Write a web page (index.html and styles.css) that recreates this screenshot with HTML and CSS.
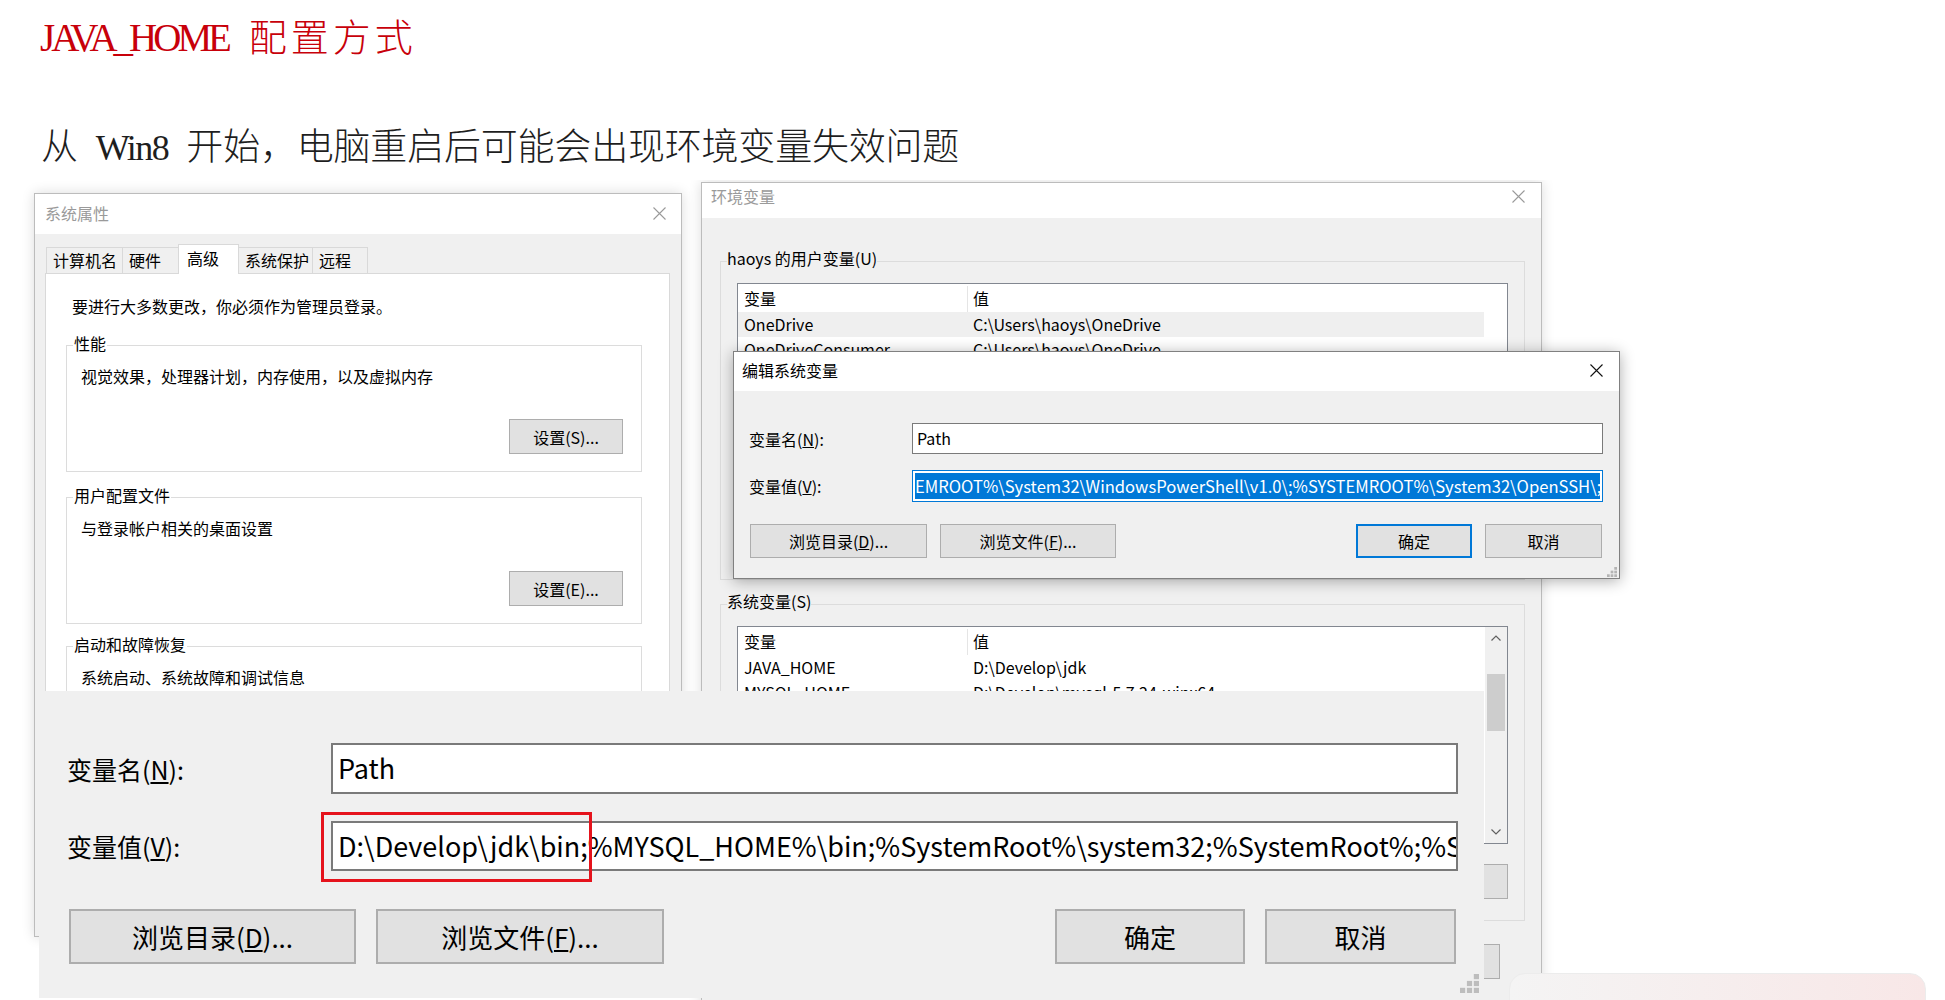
FILE: index.html
```html
<!DOCTYPE html>
<html lang="zh-CN">
<head>
<meta charset="utf-8">
<title>JAVA_HOME 配置方式</title>
<link rel="stylesheet" href="styles.css">
</head>
<body>
<main class="doc">
  <h1 class="title"><span class="lat">JAVA_HOME </span>配置方式</h1>
  <p class="lead">从<span class="lat"> Win8 </span>开始，电脑重启后可能会出现环境变量失效问题</p>

  <div class="stage">
    <!-- 系统属性 -->
    <section class="win sysprop">
      <header class="titlebar">
        <span class="cap">系统属性</span>
        <span class="close"><svg width="13" height="13" viewBox="0 0 13 13"><path d="M0.5 0.5 L12.5 12.5 M12.5 0.5 L0.5 12.5" stroke="#9a9a9a" stroke-width="1.1" fill="none"/></svg></span>
      </header>
      <div class="sp-body">
        <div class="tabs">
          <span class="tab t1">计算机名</span>
          <span class="tab t2">硬件</span>
          <span class="tab t3 sel">高级</span>
          <span class="tab t4">系统保护</span>
          <span class="tab t5">远程</span>
        </div>
        <div class="panel">
          <p class="note">要进行大多数更改，你必须作为管理员登录。</p>
          <fieldset class="grp g1">
            <legend>性能</legend>
            <p class="gtext">视觉效果，处理器计划，内存使用，以及虚拟内存</p>
            <div class="btnrow"><span class="btn setbtn">设置(S)...</span></div>
          </fieldset>
          <fieldset class="grp g2">
            <legend>用户配置文件</legend>
            <p class="gtext">与登录帐户相关的桌面设置</p>
            <div class="btnrow"><span class="btn setbtn">设置(E)...</span></div>
          </fieldset>
          <fieldset class="grp g3">
            <legend>启动和故障恢复</legend>
            <p class="gtext">系统启动、系统故障和调试信息</p>
          </fieldset>
        </div>
      </div>
    </section>

    <!-- 环境变量 -->
    <section class="win envvars">
      <header class="titlebar">
        <span class="cap">环境变量</span>
        <span class="close"><svg width="13" height="13" viewBox="0 0 13 13"><path d="M0.5 0.5 L12.5 12.5 M12.5 0.5 L0.5 12.5" stroke="#9a9a9a" stroke-width="1.1" fill="none"/></svg></span>
      </header>
      <div class="ev-body">
        <fieldset class="egrp eg1">
          <legend>haoys 的用户变量(U)</legend>
          <div class="lv lv1">
            <div class="lv-main">
              <div class="lv-head"><span class="c1">变量</span><span class="c2">值</span></div>
              <div class="lv-row hl"><span class="c1">OneDrive</span><span class="c2">C:\Users\haoys\OneDrive</span></div>
              <div class="lv-row"><span class="c1">OneDriveConsumer</span><span class="c2">C:\Users\haoys\OneDrive</span></div>
            </div>
            <div class="lv-side"></div>
          </div>
        </fieldset>
        <fieldset class="egrp eg2">
          <legend>系统变量(S)</legend>
          <div class="lv lv2">
            <div class="lv-main">
              <div class="lv-head"><span class="c1">变量</span><span class="c2">值</span></div>
              <div class="lv-row"><span class="c1">JAVA_HOME</span><span class="c2">D:\Develop\jdk</span></div>
              <div class="lv-row"><span class="c1">MYSQL_HOME</span><span class="c2">D:\Develop\mysql-5.7.24-winx64</span></div>
            </div>
            <div class="sbar">
              <span class="arrow"><svg width="10" height="6" viewBox="0 0 10 6"><path d="M0.5 5.5 L5 1 L9.5 5.5" stroke="#606060" stroke-width="1.2" fill="none"/></svg></span>
              <span class="track"><span class="thumb"></span></span>
              <span class="arrow"><svg width="10" height="6" viewBox="0 0 10 6"><path d="M0.5 0.5 L5 5 L9.5 0.5" stroke="#606060" stroke-width="1.2" fill="none"/></svg></span>
            </div>
          </div>
          <div class="ev-btns">
            <span class="btn evbtn"></span>
            <span class="btn evbtn"></span>
            <span class="btn evbtn"></span>
          </div>
        </fieldset>
        <div class="ev-foot">
          <span class="btn evbtn"></span>
          <span class="btn evbtn"></span>
        </div>
      </div>
    </section>

    <!-- 编辑系统变量 -->
    <section class="win editvar">
      <header class="titlebar">
        <span class="cap">编辑系统变量</span>
        <span class="close"><svg width="13" height="13" viewBox="0 0 13 13"><path d="M0.5 0.5 L12.5 12.5 M12.5 0.5 L0.5 12.5" stroke="#111" stroke-width="1.1" fill="none"/></svg></span>
      </header>
      <div class="ed-body">
        <div class="ed-row">
          <span class="ed-label">变量名(<u>N</u>):</span>
          <span class="ed-input">Path</span>
        </div>
        <div class="ed-row r2">
          <span class="ed-label">变量值(<u>V</u>):</span>
          <span class="ed-input focus"><span class="selected">EMROOT%\System32\WindowsPowerShell\v1.0\;%SYSTEMROOT%\System32\OpenSSH\;</span></span>
        </div>
        <div class="ed-btns">
          <div class="grp-l">
            <span class="btn edbtn b1">浏览目录(<u>D</u>)...</span>
            <span class="btn edbtn b2">浏览文件(<u>F</u>)...</span>
          </div>
          <div class="grp-r">
            <span class="btn edbtn b3 default">确定</span>
            <span class="btn edbtn b4">取消</span>
          </div>
        </div>
      </div>
      <svg class="grip small" width="10" height="10" viewBox="0 0 11 11"><g fill="#b4b4b4"><rect x="8" y="0" width="3" height="3"/><rect x="4" y="4" width="3" height="3"/><rect x="8" y="4" width="3" height="3"/><rect x="0" y="8" width="3" height="3"/><rect x="4" y="8" width="3" height="3"/><rect x="8" y="8" width="3" height="3"/></g></svg>
    </section>

    <!-- 放大的编辑对话框 -->
    <section class="win bigedit">
      <div class="be-row">
        <span class="be-label">变量名(<u>N</u>):</span>
        <span class="be-field"><span class="be-input">Path</span></span>
      </div>
      <div class="be-row r2">
        <span class="be-label">变量值(<u>V</u>):</span>
        <span class="be-field">
          <span class="be-input">D:\Develop\jdk\bin;%MYSQL_HOME%\bin;%SystemRoot%\system32;%SystemRoot%;%SystemRoot%\System32\Wbem;</span>
          <span class="redbox"></span>
        </span>
      </div>
      <div class="be-btns">
        <div class="grp-l">
          <span class="btn bebtn w1">浏览目录(<u>D</u>)...</span>
          <span class="btn bebtn w2">浏览文件(<u>F</u>)...</span>
        </div>
        <div class="grp-r">
          <span class="btn bebtn w3">确定</span>
          <span class="btn bebtn w4">取消</span>
        </div>
      </div>
      <svg class="grip big" width="19" height="19" viewBox="0 0 11 11"><g fill="#bdbdbd"><rect x="8" y="0" width="3" height="3"/><rect x="4" y="4" width="3" height="3"/><rect x="8" y="4" width="3" height="3"/><rect x="0" y="8" width="3" height="3"/><rect x="4" y="8" width="3" height="3"/><rect x="8" y="8" width="3" height="3"/></g></svg>
    </section>

    <div class="card"></div>
  </div>
</main>
</body>
</html>
```

FILE: styles.css
```css
* { box-sizing: border-box; }
html, body { margin: 0; background: #fff; }
body { font-family: "Noto Sans CJK SC", sans-serif; color: #000; }

.doc { width: 1945px; height: 1000px; overflow: hidden; padding-top: 15px; }

.title {
  margin: 0 0 0 40px;
  font-size: 38px;
  line-height: 40px;
  height: 40px;
  font-weight: 300;
  color: #c8000a;
  letter-spacing: 4px;
  white-space: nowrap;
}
.lat { font-family: "Liberation Serif", serif; }
.title .lat { font-size: 39px; letter-spacing: -4px; word-spacing: 15px; }

.lead {
  margin: 69.5px 0 0 41px;
  font-size: 37px;
  line-height: 38px;
  height: 38px;
  font-weight: 300;
  color: #1e1e1e;
  letter-spacing: -0.2px;
  white-space: nowrap;
}
.lead .lat { font-size: 36px; letter-spacing: -1.5px; word-spacing: 10.5px; }

.stage { position: relative; height: 820px; margin-top: 17.5px; overflow: hidden; }

/* generic window */
.win { position: absolute; display: flex; flex-direction: column; background: #f0f0f0; font-size: 16px; }
.titlebar { display: flex; align-items: center; background: #fff; flex: none; }
.titlebar .cap { flex: 1; line-height: 20px; white-space: nowrap; }
.close { display: flex; align-items: center; justify-content: center; height: 20px; }
.btn {
  display: flex; align-items: center; justify-content: center;
  background: #e1e1e1; border: 1px solid #adadad; white-space: nowrap;
  color: #000;
}

/* 系统属性 */
.sysprop {
  left: 34px; top: 13px; width: 648px; height: 744px;
  border: 1px solid #bcbcbc;
  box-shadow: 0 0 12px rgba(0,0,0,0.14);
}
.sysprop .titlebar { height: 40px; padding: 0 0 2px 10px; color: #9a9a9a; }
.sysprop .close { width: 44px; }
.sp-body { padding: 10px 11px 0 10px; }
.tabs { display: flex; align-items: flex-end; height: 29px; padding-left: 1px; }
.tab {
  height: 26px; border: 1px solid #d9d9d9; border-bottom: 0; margin-right: -1px;
  background: #f0f0f0; padding-left: 6px; line-height: 24px; font-size: 16px; white-space: nowrap;
}
.t1 { width: 77px; }
.t2 { width: 57px; }
.t3 { width: 61px; }
.t4 { width: 75px; }
.t5 { width: 56px; }
.tab.sel { background: #fff; padding-left: 8px; position: relative; z-index: 1; margin-bottom: -1px; height: 30px; line-height: 26px; }
.panel {
  background: #fff; border: 1px solid #d9d9d9; height: 620px;
  padding: 20px 27px 0 20px;
}
.note { margin: 0 0 0 6px; line-height: 24px; white-space: nowrap; }
.grp {
  margin: 15px 0 0; padding: 7px 18px 17px 6px; border: 1px solid #dcdcdc; min-width: 0;
}
.grp.g2 { margin-top: 13px; }
.grp.g3 { margin-top: 10px; height: 120px; }
.grp legend { padding: 0 1px 4px; line-height: 20px; font-size: 16px; white-space: nowrap; }
.gtext { margin: 0 0 0 8px; line-height: 24px; white-space: nowrap; }
.btnrow { display: flex; justify-content: flex-end; margin-top: 31px; }
.setbtn { width: 114px; height: 35px; }

/* 环境变量 */
.envvars {
  left: 701px; top: 2px; width: 841px; height: 830px;
  border: 1px solid #bcbcbc;
  box-shadow: 0 0 12px rgba(0,0,0,0.14);
}
.envvars .titlebar { height: 35px; padding: 0 0 9px 9px; color: #9a9a9a; }
.envvars .close { width: 45px; }
.ev-body { padding: 0 16px 0 18px; display: flex; flex-direction: column; }
.egrp { margin: 30px 0 0; padding: 9px 16px 21px 6px; border: 1px solid #dcdcdc; min-width: 0; }
.egrp legend { padding: 0 0 6px; line-height: 20px; font-size: 16px; white-space: nowrap; }
.eg1 { height: 332px; }
.eg2 { margin-top: 11px; }
.lv { display: flex; margin-left: 10px; border: 1px solid #828790; background: #fff; overflow: hidden; }
.lv1 { height: 270px; }
.lv2 { height: 218px; }
.lv-main { flex: 1; min-width: 0; }
.lv-side { width: 23px; flex: none; }
.lv-head, .lv-row { display: grid; grid-template-columns: 230px 1fr; white-space: nowrap; }
.lv-head { height: 28px; padding-top: 2px; }
.lv-head .c1 { border-right: 1px solid #e5e5e5; }
.lv-head span { line-height: 24px; }
.lv-row { height: 25px; line-height: 25px; }
.lv-row.hl { background: #efefef; }
.c1 { padding-left: 6px; overflow: hidden; }
.c2 { padding-left: 5px; overflow: hidden; }
.sbar { width: 22px; flex: none; background: #f0f0f0; display: flex; flex-direction: column; }
.arrow { height: 22px; display: flex; align-items: center; justify-content: center; flex: none; }
.track { flex: 1; display: flex; flex-direction: column; align-items: center; }
.thumb { width: 18px; height: 57px; margin-top: 25px; background: #cdcdcd; }
.ev-btns { display: flex; justify-content: flex-end; gap: 10px; margin-top: 20px; }
.evbtn { width: 100px; height: 35px; }
.ev-foot { display: flex; justify-content: flex-end; gap: 10px; margin-top: 23px; margin-right: 25px; }

/* 编辑系统变量 */
.editvar {
  left: 733px; top: 171px; width: 887px; height: 228px;
  border: 1px solid #808080;
  box-shadow: 0 2px 14px rgba(0,0,0,0.32);
}
.editvar .titlebar { height: 39px; padding: 0 0 3px 8px; color: #000; }
.editvar .close { width: 45px; }
.ed-body { padding: 32px 16px 0 15px; }
.ed-row { display: flex; align-items: center; }
.ed-row.r2 { margin-top: 16px; }
.ed-label { flex: 0 0 163px; white-space: nowrap; line-height: 20px; }
.ed-input {
  flex: 1; min-width: 0; height: 31px; border: 1px solid #7a7a7a; background: #fff;
  padding-left: 4px; line-height: 29px; white-space: nowrap; overflow: hidden;
}
.ed-input.focus {
  height: 32px; border-color: #0078d7; padding: 2px;
  display: flex; justify-content: flex-end;
}
.selected {
  display: block; flex: 1; background: #0078d7; color: #fff; line-height: 26px;
  text-align: right; white-space: nowrap; overflow: hidden; font-size: 16.6px;
}
.ed-btns { display: flex; justify-content: space-between; margin-top: 22px; padding: 0 1px; }
.grp-l, .grp-r { display: flex; gap: 13px; }
.edbtn { height: 34px; }
.edbtn.b1 { width: 177px; }
.edbtn.b2 { width: 176px; }
.edbtn.b3 { width: 116px; }
.edbtn.b4 { width: 117px; }
.edbtn.default { border: 2px solid #0078d7; }
.grip { position: absolute; }
.grip.small { right: 2px; bottom: 1px; }

/* 放大的编辑对话框 */
.bigedit {
  left: 39px; top: 511px; width: 1445px; height: 307px;
  padding: 52px 26px 0 28px; font-size: 25px;
}
.be-row { display: flex; align-items: center; }
.be-row.r2 { margin-top: 27px; }
.be-label { flex: 0 0 264px; white-space: nowrap; line-height: 30px; }
.be-field { flex: 1; min-width: 0; position: relative; display: flex; }
.be-input {
  flex: 1; min-width: 0; height: 51px; border: 2px solid #7a7a7a; background: #fff;
  padding-left: 5px; font-size: 27px; line-height: 46px; white-space: nowrap; overflow: hidden;
}
.be-row.r2 .be-input { height: 50px; }
.redbox {
  position: absolute; left: -10px; top: -9px; width: 271px; height: 70px;
  border: 3px solid #e5131c;
}
.be-btns { display: flex; justify-content: space-between; margin-top: 38px; padding: 0 2px; }
.be-btns .grp-l, .be-btns .grp-r { gap: 20px; }
.bebtn { height: 55px; border-width: 2px; font-size: 26px; }
.bebtn.w1 { width: 287px; }
.bebtn.w2 { width: 288px; }
.bebtn.w3 { width: 190px; }
.bebtn.w4 { width: 191px; }
.grip.big { right: 5px; bottom: 5px; }

.card {
  position: absolute; left: 1509px; top: 793px; width: 417px; height: 40px;
  border: 1px solid #ececec; border-radius: 16px 16px 0 0;
  background: linear-gradient(90deg, #f4f4f4, #f8e7e7);
}
```
